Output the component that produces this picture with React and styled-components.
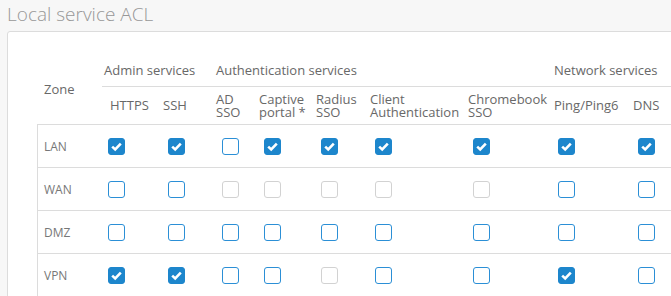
import React from 'react'
import styled, {createGlobalStyle} from 'styled-components'

const GlobalStyle = createGlobalStyle`
    html, body {
        margin: 0;
        padding: 0;
        background: #f7f7f7;
        font-family: "Open Sans", "Liberation Sans", sans-serif;
    }
`

const Page = styled.div`
    height: 296px;
    padding: 0 0 0 7px;
    overflow: hidden;
    box-sizing: border-box;
`

const Title = styled.h2`
    margin: 0;
    height: 31px;
    font-size: 19px;
    font-weight: 300;
    line-height: 29px;
    color: #979797;
`

const Panel = styled.div`
    width: calc(100% + 10px);
    height: 280px;
    background: #fff;
    border: 1px solid #dcdcdc;
    border-radius: 3px;
    padding: 24px 0 0 29px;
    box-sizing: border-box;
    overflow: hidden;
`

const COLS = '61px 59px 53px 43px 57px 54px 98px 86px 79px 63px'

const Grid = styled.div`
    display: grid;
    grid-template-columns: ${COLS};
    color: #686868;
    font-size: 13px;
`

const ZoneHead = styled.div`
    grid-row: 1 / span 2;
    grid-column: 1;
    display: flex;
    align-items: center;
    padding-left: 7px;
    padding-bottom: 2px;
`

const GroupHead = styled.div`
    grid-row: 1;
    grid-column: ${({$from, $span}) => `${$from} / span ${$span}`};
    height: 31px;
    padding-left: 6px;
    padding-top: 5px;
    box-sizing: border-box;
    line-height: 18px;
    white-space: nowrap;
`

const GroupLine = styled.div`
    grid-row: 1;
    grid-column: 2 / -1;
    align-self: end;
    margin-left: 4px;
    border-bottom: 1px solid #dcdcdc;
`

const Label = styled.div`
    grid-row: 2;
    height: 37px;
    display: flex;
    align-items: center;
    padding-left: ${({$pad}) => $pad}px;
    line-height: 13px;
    white-space: pre;
`

const ZoneCell = styled.div`
    grid-column: 1;
    height: 43px;
    display: flex;
    align-items: center;
    padding-left: 6px;
    font-size: 12px;
    color: #777;
    border-top: 1px solid #dcdcdc;
    border-left: 1px solid #dcdcdc;
    box-sizing: border-box;
`

const Cell = styled.div`
    height: 43px;
    display: flex;
    align-items: center;
    padding-left: ${({$pad}) => $pad}px;
    padding-top: 1px;
    border-top: 1px solid #dcdcdc;
    box-sizing: border-box;
`

const Box = styled.span`
    width: 17px;
    height: 17px;
    box-sizing: border-box;
    border-radius: 3px;
    display: inline-flex;
    align-items: center;
    justify-content: center;
    background: ${({$state}) => ($state === 'on' ? '#1d86cc' : '#fff')};
    border: 1.5px solid
        ${({$state}) => ($state === 'on' ? '#1d86cc' : $state === 'off' ? '#2b8fd6' : '#d2d2d2')};
`

const columns = [
    {label: 'HTTPS', pad: 12, box: 10},
    {label: 'SSH', pad: 6, box: 11},
    {label: 'AD\nSSO', pad: 6, box: 12},
    {label: 'Captive\nportal *', pad: 6, box: 11},
    {label: 'Radius\nSSO', pad: 6, box: 11},
    {label: 'Client\nAuthentication', pad: 6, box: 11},
    {label: 'Chromebook\nSSO', pad: 6, box: 11},
    {label: 'Ping/Ping6', pad: 6, box: 10},
    {label: 'DNS', pad: 6, box: 11},
]

// 1 = checked, 0 = unchecked, x = disabled
const rows = [
    {zone: 'LAN', values: '110111111'},
    {zone: 'WAN', values: '00xxxxx00'},
    {zone: 'DMZ', values: '000000000'},
    {zone: 'VPN', values: '1100x0010'},
]

const stateOf = (c) => (c === '1' ? 'on' : c === '0' ? 'off' : 'disabled')

const Check = ({state}) => (
    <Box $state={state}>
        {state === 'on' && (
            <svg width="13" height="13" viewBox="0 0 13 13">
                <path d="M2.2 6.6 L5.2 9.4 L10.8 3.6" fill="none" stroke="#fff" strokeWidth="2.6" />
            </svg>
        )}
    </Box>
)

const App = () => (
    <Page>
        <GlobalStyle />
        <Title>Local service ACL</Title>
        <Panel>
            <Grid>
                <ZoneHead>Zone</ZoneHead>
                <GroupHead $from={2} $span={2}>Admin services</GroupHead>
                <GroupHead $from={4} $span={5}>Authentication services</GroupHead>
                <GroupHead $from={9} $span={2}>Network services</GroupHead>
                <GroupLine />
                {columns.map((col, i) => (
                    <Label key={i} $pad={col.pad} style={{gridColumn: i + 2}}>
                        {col.label}
                    </Label>
                ))}
                {rows.map((row) => (
                    <React.Fragment key={row.zone}>
                        <ZoneCell>{row.zone}</ZoneCell>
                        {columns.map((col, i) => (
                            <Cell key={i} $pad={col.box}>
                                <Check state={stateOf(row.values[i])} />
                            </Cell>
                        ))}
                    </React.Fragment>
                ))}
            </Grid>
        </Panel>
    </Page>
)

export default App
